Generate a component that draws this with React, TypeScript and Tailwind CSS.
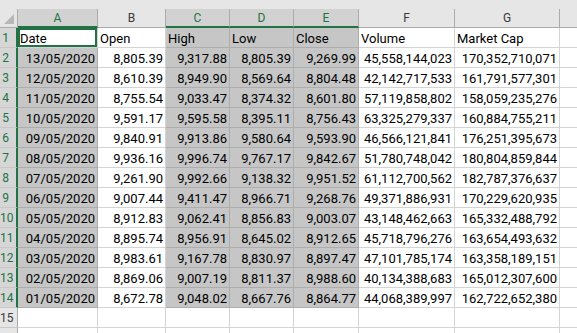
import React from "react";

const data: string[][] = [
  ["Date", "Open", "High", "Low", "Close", "Volume", "Market Cap"],
  ["13/05/2020", "8,805.39", "9,317.88", "8,805.39", "9,269.99", "45,558,144,023", "170,352,710,071"],
  ["12/05/2020", "8,610.39", "8,949.90", "8,569.64", "8,804.48", "42,142,717,533", "161,791,577,301"],
  ["11/05/2020", "8,755.54", "9,033.47", "8,374.32", "8,601.80", "57,119,858,802", "158,059,235,276"],
  ["10/05/2020", "9,591.17", "9,595.58", "8,395.11", "8,756.43", "63,325,279,337", "160,884,755,211"],
  ["09/05/2020", "9,840.91", "9,913.86", "9,580.64", "9,593.90", "46,566,121,841", "176,251,395,673"],
  ["08/05/2020", "9,936.16", "9,996.74", "9,767.17", "9,842.67", "51,780,748,042", "180,804,859,844"],
  ["07/05/2020", "9,261.90", "9,992.66", "9,138.32", "9,951.52", "61,112,700,562", "182,787,376,637"],
  ["06/05/2020", "9,007.44", "9,411.47", "8,966.71", "9,268.76", "49,371,886,931", "170,229,620,935"],
  ["05/05/2020", "8,912.83", "9,062.41", "8,856.83", "9,003.07", "43,148,462,663", "165,332,488,792"],
  ["04/05/2020", "8,895.74", "8,956.91", "8,645.02", "8,912.65", "45,718,796,276", "163,654,493,632"],
  ["03/05/2020", "8,983.61", "9,167.78", "8,830.97", "8,897.47", "47,101,785,174", "163,358,189,151"],
  ["02/05/2020", "8,869.06", "9,007.19", "8,811.37", "8,988.60", "40,134,388,683", "165,012,307,600"],
  ["01/05/2020", "8,672.78", "9,048.02", "8,667.76", "8,864.77", "44,068,389,997", "162,722,652,380"],
];

const widthClass = ["w-[80px]", "w-[68px]", "w-[64px]", "w-[64px]", "w-[65px]", "w-[96px]", "w-[105px]"];
const letters = ["A", "B", "C", "D", "E", "F", "G"];
const selCol = [true, false, true, true, true, false, false];

function HeaderCell({ i }: { i: number }) {
  const sel = selCol[i];
  return (
    <div
      className={
        "shrink-0 h-[19px] flex items-center justify-center border-r border-r-[#ababab] text-[12px] " +
        widthClass[i] +
        (sel
          ? " bg-[#d2d2d2] text-[#217346] border-b-2 border-b-[#217346]"
          : " bg-[#e6e6e6] text-[#3a3a3a] border-b border-b-[#ababab]")
      }
    >
      {letters[i]}
    </div>
  );
}

function RowHeader({ n, sel }: { n?: number; sel: boolean }) {
  return (
    <div
      className={
        "shrink-0 w-[18px] h-[20px] flex items-center border-b border-b-[#c8c8c8] text-[12px] " +
        (sel
          ? "bg-[#d6d6d6] text-[#217346] border-r-2 border-r-[#217346]"
          : "bg-[#e6e6e6] text-[#3a3a3a] border-r border-r-[#ababab]")
      }
    >
      <span className="w-[11px] text-center leading-none">{n}</span>
    </div>
  );
}

function DataCell({ r, c, text }: { r: number; c: number; text: string }) {
  const active = r === 0 && c === 0;
  const sel = selCol[c] && !active;
  const right = r > 0;
  return (
    <div
      className={
        "shrink-0 h-[20px] pt-[1px] leading-[19px] overflow-hidden whitespace-nowrap border-r border-b text-[13px] text-black " +
        widthClass[c] +
        (right ? " text-right pr-[2px]" : " text-left pl-[2px]") +
        (active ? " bg-white border-[#d4d4d4] shadow-[inset_0_0_0_2px_#217346]" : "") +
        (sel ? " bg-[#c6c6c6] border-[#adadad]" : "") +
        (!sel && !active ? " bg-white border-[#d4d4d4]" : "")
      }
    >
      {text}
    </div>
  );
}

function EmptyRow({ n }: { n?: number }) {
  return (
    <div className="flex">
      <RowHeader n={n} sel={false} />
      {widthClass.map((w, i) => (
        <div key={i} className={"shrink-0 h-[20px] bg-white border-r border-b border-[#d4d4d4] " + w} />
      ))}
      <div className="flex-1 h-[20px] bg-white border-b border-[#d4d4d4]" />
    </div>
  );
}

export default function App() {
  return (
    <div className="w-[577px] h-[333px] overflow-hidden bg-white font-['Roboto','Liberation_Sans',sans-serif]">
      <div className="h-[9px] bg-[#e6e6e6]" />
      <div className="flex bg-[#e6e6e6]">
        <div className="shrink-0 w-[18px] h-[19px] border-r border-b border-[#ababab] bg-[#e6e6e6]">
          <svg width="17" height="18" viewBox="0 0 17 18">
            <polygon points="4,15 14,15 14,5" fill="#b7b7b7" />
          </svg>
        </div>
        {letters.map((_, i) => (
          <HeaderCell key={i} i={i} />
        ))}
        <div className="flex-1 h-[19px] bg-[#e6e6e6] border-b border-b-[#ababab]" />
      </div>
      {data.map((row, r) => (
        <div key={r} className="flex">
          <RowHeader n={r + 1} sel={true} />
          {row.map((t, c) => (
            <DataCell key={c} r={r} c={c} text={t} />
          ))}
          <div className="flex-1 h-[20px] bg-white border-b border-[#d4d4d4]" />
        </div>
      ))}
      <EmptyRow n={15} />
      <EmptyRow />
    </div>
  );
}
